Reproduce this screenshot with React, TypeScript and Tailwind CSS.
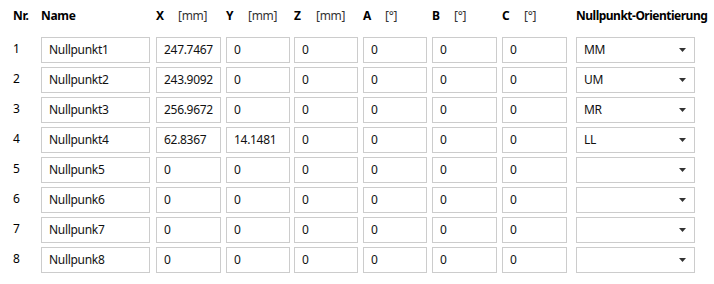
import React from "react";

type Row = { name: string; x: string; y: string; z: string; a: string; b: string; c: string; o: string };

const rows: Row[] = [
  { name: "Nullpunkt1", x: "247.7467", y: "0", z: "0", a: "0", b: "0", c: "0", o: "MM" },
  { name: "Nullpunkt2", x: "243.9092", y: "0", z: "0", a: "0", b: "0", c: "0", o: "UM" },
  { name: "Nullpunkt3", x: "256.9672", y: "0", z: "0", a: "0", b: "0", c: "0", o: "MR" },
  { name: "Nullpunkt4", x: "62.8367", y: "14.1481", z: "0", a: "0", b: "0", c: "0", o: "LL" },
  { name: "Nullpunk5", x: "0", y: "0", z: "0", a: "0", b: "0", c: "0", o: "" },
  { name: "Nullpunk6", x: "0", y: "0", z: "0", a: "0", b: "0", c: "0", o: "" },
  { name: "Nullpunk7", x: "0", y: "0", z: "0", a: "0", b: "0", c: "0", o: "" },
  { name: "Nullpunk8", x: "0", y: "0", z: "0", a: "0", b: "0", c: "0", o: "" },
];

const cols = "grid grid-cols-[41px_115px_70px_68px_69px_69px_70px_74px_119px]";

function Box({ value, w }: { value: string; w: string }) {
  return (
    <div className={`${w} h-[26px] border border-[#cccccc] bg-white flex items-center pl-[7px] text-[12px] tracking-[-0.3px] text-[#111]`}>
      {value}
    </div>
  );
}

function Head({ label, unit }: { label: string; unit?: string }) {
  return (
    <div className="flex items-center">
      <span className="w-[22px] font-bold text-black">{label}</span>
      {unit && <span className="text-[#333] font-normal">{unit}</span>}
    </div>
  );
}

export default function App() {
  return (
    <div
      className="w-[714px] h-[284px] bg-white text-[12px] text-black"
      style={{ fontFamily: '"Noto Sans", "Open Sans", sans-serif' }}
    >
      <div className={`${cols} h-[35px] pb-[3px] items-center tracking-[-0.3px]`}>
        <div className="pl-[13px] font-bold">Nr.</div>
        <div className="font-bold">Name</div>
        <Head label="X" unit="[mm]" />
        <Head label="Y" unit="[mm]" />
        <Head label="Z" unit="[mm]" />
        <Head label="A" unit="[°]" />
        <Head label="B" unit="[°]" />
        <Head label="C" unit="[°]" />
        <div className="font-bold whitespace-nowrap tracking-[-0.5px]">Nullpunkt-Orientierung</div>
      </div>
      {rows.map((r, i) => (
        <div key={i} className={`${cols} h-[30px] items-center`}>
          <div className="pl-[13px] pb-[3px] text-[12px]">{i + 1}</div>
          <Box value={r.name} w="w-[109px]" />
          <Box value={r.x} w="w-[65px]" />
          <Box value={r.y} w="w-[64px]" />
          <Box value={r.z} w="w-[64px]" />
          <Box value={r.a} w="w-[64px]" />
          <Box value={r.b} w="w-[65px]" />
          <Box value={r.c} w="w-[65px]" />
          <div className="w-[119px] h-[26px] border border-[#cccccc] bg-white flex items-center justify-between pl-[7px] pr-[8px] text-[12px] tracking-[-0.3px] text-[#111]">
            <span>{r.o}</span>
            <svg width="7" height="4" viewBox="0 0 7 4">
              <path d="M0 0 L7 0 L3.5 4 Z" fill="#333" />
            </svg>
          </div>
        </div>
      ))}
    </div>
  );
}
